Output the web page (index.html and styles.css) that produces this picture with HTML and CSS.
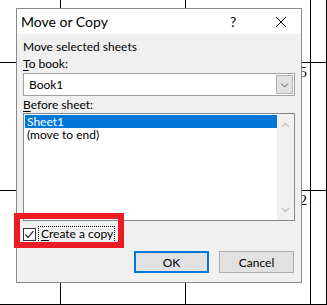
FILE: index.html
```html
<!DOCTYPE html>
<html lang="en">
<head>
    <meta charset="UTF-8">
    <title>Move or Copy</title>
    <link rel="stylesheet" href="styles.css">
</head>
<body>
    <div class="sheet">
        <div class="cell"></div>
        <div class="cell"></div>
        <div class="cell"></div>
        <div class="cell"></div>
        <div class="cell"></div>
        <div class="cell"></div>
        <div class="cell num">5</div>
        <div class="cell"></div>
        <div class="cell"></div>
        <div class="cell"></div>
        <div class="cell num">2</div>
        <div class="cell"></div>
    </div>

    <div class="dialog">
        <div class="titlebar">
            <span class="title">Move or Copy</span>
            <span class="help">?</span>
            <span class="close">
                <svg width="12" height="12" viewBox="0 0 12 12"><path d="M1 1L11 11M11 1L1 11" stroke="#000" stroke-width="1" fill="none"/></svg>
            </span>
        </div>
        <div class="content">
            <div class="label first">Move selected sheets</div>
            <div class="label"><u>T</u>o book:</div>
            <div class="combo">
                <span class="combo-text">Book1</span>
                <span class="drop">
                    <svg width="9" height="6" viewBox="0 0 9 6"><path d="M1 1.5L4.5 5L8 1.5" stroke="#606060" stroke-width="1" fill="none"/></svg>
                </span>
            </div>
            <div class="label"><u>B</u>efore sheet:</div>
            <div class="list">
                <div class="items">
                    <div class="item selected">Sheet1</div>
                    <div class="item">(move to end)</div>
                </div>
                <div class="scroll">
                    <svg width="9" height="6" viewBox="0 0 9 6"><path d="M1 5L4.5 1.5L8 5" stroke="#c8c8c8" stroke-width="1.6" fill="none"/></svg>
                    <svg width="9" height="6" viewBox="0 0 9 6"><path d="M1 1L4.5 4.5L8 1" stroke="#c8c8c8" stroke-width="1.6" fill="none"/></svg>
                </div>
            </div>
            <div class="copy-row">
                <span class="check">
                    <svg width="11" height="11" viewBox="0 0 11 11"><path d="M1.5 5.5L4 8.5L9.5 2" stroke="#333" stroke-width="1.2" fill="none"/></svg>
                </span>
                <span class="focus"><u>C</u>reate a copy</span>
            </div>
            <div class="buttons">
                <button class="btn default">OK</button>
                <button class="btn">Cancel</button>
            </div>
        </div>
    </div>

    <div class="highlight"></div>
</body>
</html>
```

FILE: styles.css
```css
* {
    box-sizing: border-box;
}
body {
    margin: 0;
    width: 327px;
    height: 305px;
    overflow: hidden;
    background: #fff;
    font-family: Lato, "Noto Sans", sans-serif;
    position: relative;
}

/* spreadsheet behind the dialog */
.sheet {
    display: grid;
    grid-template-columns: 61px 125px 125px 16px;
    grid-template-rows: 63px 128px 114px;
}
.cell {
    border-right: 1px solid #000;
    border-bottom: 1px solid #000;
}
.num {
    text-align: right;
    padding: 2px 3px 0 0;
    font-family: "Liberation Serif", serif;
    font-size: 15px;
    line-height: 15px;
}

/* dialog */
.dialog {
    position: absolute;
    left: 16px;
    top: 8px;
    width: 286px;
    height: 275px;
    border: 1px solid #888;
    background: #f0f0f0;
    display: flex;
    flex-direction: column;
}
.titlebar {
    height: 25px;
    background: #fff;
    display: flex;
    align-items: center;
    font-size: 14px;
}
.title {
    padding-left: 4px;
    flex: 1;
}
.help {
    width: 12px;
    font-size: 14px;
    margin-right: 33px;
}
.close {
    width: 12px;
    height: 12px;
    margin-right: 14px;
    display: flex;
}
.content {
    flex: 1;
    padding: 5px 6px 0 6px;
    font-size: 12px;
    color: #000;
}
.label {
    line-height: 16px;
    margin-top: 1px;
}
.label.first {
    margin-top: 0;
}
u {
    text-decoration-thickness: 1px;
    text-underline-offset: 2px;
}

.combo {
    margin-top: 1px;
    height: 23px;
    background: #fff;
    border: 1px solid #a0a0a0;
    display: flex;
    align-items: center;
    padding: 1px;
}
.combo-text {
    flex: 1;
    padding-left: 4px;
}
.drop {
    width: 17px;
    height: 19px;
    background: #e1e1e1;
    border: 1px solid #b4b4b4;
    display: flex;
    align-items: center;
    justify-content: center;
}

.list {
    height: 108px;
    background: #fff;
    border: 1px solid #828790;
    display: flex;
    padding-left: 1px;
}
.items {
    flex: 1;
    padding-top: 1px;
}
.item {
    height: 13px;
    line-height: 13px;
    padding-left: 2px;
    overflow: hidden;
}
.item.selected {
    background: #0078d7;
    color: #fff;
}
.scroll {
    width: 17px;
    background: #f0f0f0;
    display: flex;
    flex-direction: column;
    justify-content: space-between;
    align-items: center;
    padding: 8px 0 7px;
}

.copy-row {
    display: flex;
    align-items: center;
    margin-top: 5px;
    height: 17px;
}
.check {
    width: 13px;
    height: 13px;
    border: 1px solid #333;
    background: #fff;
    display: flex;
    align-items: center;
    justify-content: center;
}
.focus {
    margin-left: 2px;
    padding: 0 1px 1px 2px;
    border: 1px dotted #000;
    line-height: 14px;
}

.buttons {
    display: flex;
    justify-content: flex-end;
    gap: 10px;
    margin-top: 8px;
    padding-right: 1px;
}
.btn {
    width: 75px;
    height: 22px;
    background: #e1e1e1;
    border: 1px solid #adadad;
    font-family: inherit;
    font-size: 12px;
    color: #000;
    padding: 0;
}
.btn.default {
    border: 2px solid #0078d7;
}

/* red annotation box */
.highlight {
    position: absolute;
    left: 14px;
    top: 213px;
    width: 110px;
    height: 35px;
    border: 6px solid #ec1c24;
}
```
